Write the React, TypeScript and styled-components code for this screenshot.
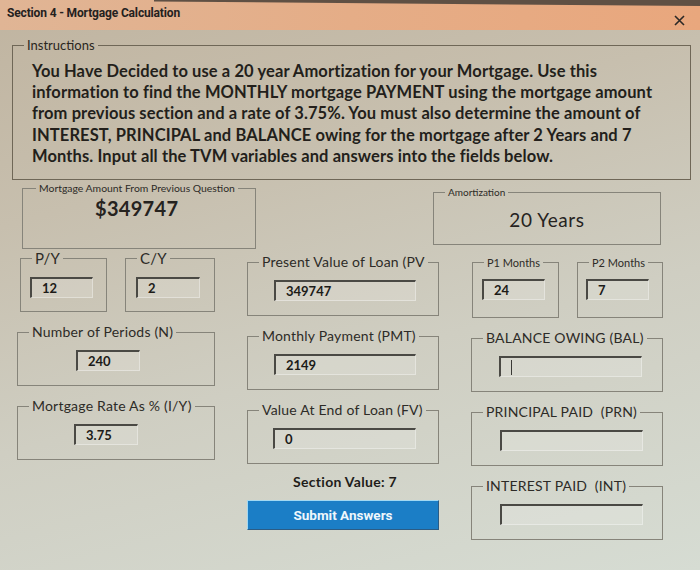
import React from 'react';
import styled, { createGlobalStyle } from 'styled-components';

const GlobalStyle = createGlobalStyle`
  html, body {
    margin: 0;
    padding: 0;
  }
  body {
    width: 700px;
    height: 570px;
    overflow: hidden;
    background: #6b5b4c;
    font-family: Lato, "DejaVu Sans", sans-serif;
  }
`;

export const Window = styled.div`
  position: relative;
  width: 700px;
  height: 570px;
  overflow: hidden;
  display: flex;
  flex-direction: column;
  background: linear-gradient(165deg, #c0b4a0 0%, #c7bfae 30%, #cfcec2 60%, #d6dcd3 100%);

  /* edge of the monitor showing above the window in the photo */
  &::before {
    content: '';
    position: absolute;
    top: 0;
    left: 0;
    right: 0;
    height: 6px;
    background: #5f5044;
    clip-path: polygon(22% 0, 100% 0, 100% 100%, 22% 25%);
  }
`;

export const TitleBar = styled.div`
  height: 30px;
  flex: none;
  display: flex;
  align-items: flex-start;
  justify-content: space-between;
  padding: 0 15px 0 7px;
  background: linear-gradient(90deg, #e0b595 0%, #e5ad87 50%, #e9a77d 100%);
`;

export const TitleText = styled.span`
  margin-top: 5px;
  font-family: "Liberation Sans Narrow", Roboto, sans-serif;
  font-weight: 700;
  font-size: 12px;
  line-height: 16px;
  letter-spacing: -0.15px;
  color: #24211e;
`;

export const CloseButton = styled.span`
  margin-top: 15px;
  display: flex;
`;

export const Body = styled.div`
  padding-top: 8px;
`;

export const Instructions = styled.fieldset`
  margin: 0 9px 0 12px;
  padding: 8px 0 12px 0;
  min-width: 0;
  border: 1px solid #6f6757;
`;

export const InstructionsCaption = styled.legend`
  margin-left: 11px;
  padding: 0 3px;
  font-size: 13px;
  line-height: 15px;
  color: #2a2620;
`;

export const InstructionsText = styled.p`
  margin: 0;
  padding-left: 19px;
  font-weight: 700;
  font-size: 16.5px;
  letter-spacing: 0.1px;
  line-height: 21.2px;
  color: #231f1b;
  white-space: nowrap;
`;

export const SummaryRow = styled.div`
  display: flex;
  align-items: flex-start;
  justify-content: space-between;
  padding: 0 39px 0 22px;
  margin-top: 2px;
`;

export const Group = styled.fieldset<{ $w?: number; $h: number; $drop?: number }>`
  margin: ${p => p.$drop ?? 0}px 0 0 0;
  padding: 0;
  min-width: 0;
  box-sizing: border-box;
  width: ${p => (p.$w ? `${p.$w}px` : 'auto')};
  height: ${p => p.$h}px;
  border: 1px solid #86847a;
`;

export const Caption = styled.legend<{ $size?: number; $gap?: number }>`
  margin-left: ${p => p.$gap ?? 11}px;
  padding: 0 3px;
  font-size: ${p => p.$size ?? 14}px;
  letter-spacing: ${p => ((p.$size ?? 14) > 12 ? 0.2 : 0)}px;
  line-height: ${p => Math.round((p.$size ?? 14) * 1.15)}px;
  color: #2d2b27;
  white-space: pre;
`;

export const BigValue = styled.div<{ $center?: boolean; $top: number }>`
  margin-top: ${p => p.$top}px;
  padding-left: ${p => (p.$center ? 0 : 72)}px;
  text-align: ${p => (p.$center ? 'center' : 'left')};
  font-size: ${p => (p.$center ? 19 : 20)}px;
  font-weight: ${p => (p.$center ? 400 : 700)};
  letter-spacing: ${p => (p.$center ? 0.6 : 0.3)}px;
  line-height: 24px;
  color: #26231f;
`;

export const FormGrid = styled.div`
  display: grid;
  grid-template-columns: 198px 192px 192px;
  column-gap: 32px;
  padding-left: 17px;
  margin-top: 1px;
`;

export const Column = styled.div<{ $drop: number }>`
  display: flex;
  flex-direction: column;
  gap: 12px;
  padding-top: ${p => p.$drop}px;
`;

export const Pair = styled.div<{ $indent: number }>`
  display: flex;
  justify-content: space-between;
  padding-left: ${p => p.$indent}px;
`;

export const Field = styled.div<{ $inset: number; $w: number }>`
  margin: 10px 0 0 ${p => p.$inset}px;
  width: ${p => p.$w}px;
  height: 21px;
  box-sizing: border-box;
  display: flex;
  align-items: center;
  padding-left: 10px;
  border-top: 2px solid #4a4944;
  border-left: 2px solid #4a4944;
  border-right: 1px solid rgba(255, 255, 255, 0.35);
  border-bottom: 1px solid rgba(255, 255, 255, 0.35);
  background: rgba(255, 255, 255, 0.16);
  font-weight: 700;
  font-size: 13px;
  color: #1c1b18;
`;

export const Caret = styled.span`
  width: 1px;
  height: 15px;
  background: #3a3935;
`;

export const SubmitArea = styled.div`
  margin-top: -3px;
  display: flex;
  flex-direction: column;
  align-items: center;
  gap: 10px;
`;

export const SectionValue = styled.div`
  font-weight: 700;
  font-size: 14px;
  letter-spacing: 0.3px;
  line-height: 17px;
  color: #1f1d1a;
  padding-left: 4px;
`;

export const SubmitButton = styled.button`
  width: 100%;
  height: 30px;
  margin: 0;
  padding: 0;
  box-sizing: border-box;
  background: #1b7ec6;
  border: 1px solid #2b5c85;
  border-top-color: #a2d8f2;
  border-left-color: #a2d8f2;
  color: #eef7fc;
  font-family: Roboto, sans-serif;
  font-weight: 700;
  font-size: 13.5px;
`;

const CloseIcon = () => (
  <svg width="11" height="11" viewBox="0 0 11 11">
    <path d="M1 1L10 10M10 1L1 10" stroke="#2c2926" strokeWidth="1.6" />
  </svg>
);

type InputGroupProps = {
  label: string;
  value?: string;
  inset: number;
  fieldWidth: number;
  width?: number;
  labelSize?: number;
  caret?: boolean;
};

const InputGroup = ({ label, value, inset, fieldWidth, width, labelSize, caret }: InputGroupProps) => (
  <Group $w={width} $h={62}>
    <Caption $size={labelSize}>{label}</Caption>
    <Field $inset={inset} $w={fieldWidth}>
      {caret ? <Caret /> : value}
    </Field>
  </Group>
);

const instructionLines = [
  'You Have Decided to use a 20 year Amortization for your Mortgage. Use this',
  'information to find the MONTHLY mortgage PAYMENT using the mortgage amount',
  'from previous section and a rate of 3.75%. You must also determine the amount of',
  'INTEREST, PRINCIPAL and BALANCE owing for the mortgage after 2 Years and 7',
  'Months. Input all the TVM variables and answers into the fields below.',
];

const App: React.FC = () => {
  return (
    <>
      <GlobalStyle />
      <Window>
        <TitleBar>
          <TitleText>Section 4 - Mortgage Calculation</TitleText>
          <CloseButton>
            <CloseIcon />
          </CloseButton>
        </TitleBar>
        <Body>
          <Instructions>
            <InstructionsCaption>Instructions</InstructionsCaption>
            <InstructionsText>
              {instructionLines.map((line, i) => (
                <React.Fragment key={line}>
                  {i > 0 && <br />}
                  {line}
                </React.Fragment>
              ))}
            </InstructionsText>
          </Instructions>

          <SummaryRow>
            <Group $w={234} $h={67}>
              <Caption $size={10.4} $gap={13}>Mortgage Amount From Previous Question</Caption>
              <BigValue $top={2}>$349747</BigValue>
            </Group>
            <Group $w={228} $h={59} $drop={4}>
              <Caption $size={10} $gap={11}>Amortization</Caption>
              <BigValue $center $top={10}>20 Years</BigValue>
            </Group>
          </SummaryRow>

          <FormGrid>
            <Column $drop={0}>
              <Pair $indent={3}>
                <InputGroup label="P/Y" value="12" width={87} inset={9} fieldWidth={63} labelSize={15} />
                <InputGroup label="C/Y" value="2" width={90} inset={10} fieldWidth={64} labelSize={15} />
              </Pair>
              <InputGroup label="Number of Periods (N)" value="240" inset={58} fieldWidth={64} />
              <InputGroup label="Mortgage Rate As % (I/Y)" value="3.75" inset={56} fieldWidth={64} />
            </Column>

            <Column $drop={4}>
              <InputGroup label="Present Value of Loan (PV" value="349747" inset={26} fieldWidth={142} />
              <InputGroup label="Monthly Payment (PMT)" value="2149" inset={26} fieldWidth={142} />
              <InputGroup label="Value At End of Loan (FV)" value="0" inset={25} fieldWidth={143} />
              <SubmitArea>
                <SectionValue>Section Value: 7</SectionValue>
                <SubmitButton>Submit Answers</SubmitButton>
              </SubmitArea>
            </Column>

            <Column $drop={6}>
              <Pair $indent={1}>
                <InputGroup label="P1 Months" value="24" width={87} inset={9} fieldWidth={63} labelSize={11} />
                <InputGroup label="P2 Months" value="7" width={86} inset={8} fieldWidth={63} labelSize={11} />
              </Pair>
              <InputGroup label="BALANCE OWING (BAL)" caret inset={27} fieldWidth={143} />
              <InputGroup label="PRINCIPAL PAID  (PRN)" inset={28} fieldWidth={143} />
              <InputGroup label="INTEREST PAID  (INT)" inset={28} fieldWidth={143} />
            </Column>
          </FormGrid>
        </Body>
      </Window>
    </>
  );
};

export default App;
